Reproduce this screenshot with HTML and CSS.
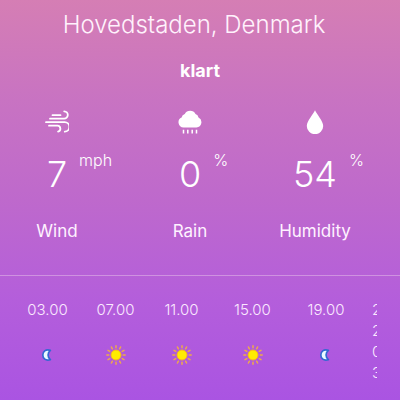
FILE: index.html
```html
<!DOCTYPE html>
<html lang="da">
<head>
<meta charset="utf-8">
<meta name="viewport" content="width=device-width, initial-scale=1">
<title>Hovedstaden, Denmark</title>
<link rel="stylesheet" href="styles.css">
</head>
<body>
<svg class="sprite" aria-hidden="true">
  <symbol id="sun" viewBox="0 0 20 20">
    <g stroke="#efaa48" stroke-width="1.5" stroke-linecap="round">
      <path d="M10 .8v2M10 17.2v2M.8 10h2M17.2 10h2M5.4 2l1 1.8M13.6 16.2l1 1.8M2 5.4l1.8 1M16.2 13.6l1.8 1M2 14.6l1.8-1M16.2 6.4l1.8-1M5.4 18l1-1.8M13.6 3.8l1-1.8"/>
    </g>
    <circle cx="10" cy="10" r="5" fill="#ffec00" stroke="#f8b51c" stroke-width="1"/>
  </symbol>
  <symbol id="moon" viewBox="0 0 20 20">
    <path d="M12.400 5.400C7.500 3.900 4.800 6.700 4.800 10s2.700 6.100 7.600 4.600C9.300 12.400 9.300 7.600 12.400 5.400z" fill="#e9fbff" stroke="#3468d2" stroke-width="1.700" stroke-linejoin="round"/>
  </symbol>
</svg>
<main class="weather">
  <h1 class="place">Hovedstaden, Denmark</h1>
  <p class="condition">klart</p>
  <section class="stats">
    <div class="stat">
      <svg class="stat-icon" viewBox="0 0 24 24" fill="none" stroke="#fff" stroke-width="1.800" stroke-linecap="round">
        <path d="M7.500 5.200H15.500M5 8.700h14a3.700 3.700 0 0 0 .2-7.400M1 12.200h18.500a4.700 4.700 0 0 1 .3 9.400M4 15.700h8.500a3 3 0 0 1 .6 5.900"/>
      </svg>
      <div class="value">7<span class="unit">mph</span></div>
      <div class="label">Wind</div>
    </div>
    <div class="stat">
      <svg class="stat-icon" viewBox="0 0 24 24" fill="#fff">
        <path d="M5.500 17.500A5.300 5.300 0 0 1 3.600 7.400 4.500 4.500 0 0 1 6.800 4 6 6 0 0 1 17.500 4a4.500 4.500 0 0 1 3 3.500A5.300 5.300 0 0 1 18.500 17.500z"/>
        <path d="M5.500 19.800v3.700M9.800 19.800v3.700M14.200 19.800v3.700M18.500 19.800v3.700" stroke="#fff" stroke-width="1.500"/>
      </svg>
      <div class="value">0<span class="unit">%</span></div>
      <div class="label">Rain</div>
    </div>
    <div class="stat">
      <svg class="stat-icon" viewBox="0 0 24 24" fill="#fff">
        <path d="M12 .2C10.500 4 3.800 11 3.800 16a8.200 8.200 0 0 0 16.400 0C20.200 11 13.500 4 12 .2z"/>
      </svg>
      <div class="value">54<span class="unit">%</span></div>
      <div class="label">Humidity</div>
    </div>
  </section>
  <section class="hours">
    <div class="hour"><span>03.00</span><svg class="hour-icon"><use href="#moon"/></svg></div>
    <div class="hour"><span>07.00</span><svg class="hour-icon"><use href="#sun"/></svg></div>
    <div class="hour"><span>11.00</span><svg class="hour-icon"><use href="#sun"/></svg></div>
    <div class="hour"><span>15.00</span><svg class="hour-icon"><use href="#sun"/></svg></div>
    <div class="hour"><span>19.00</span><svg class="hour-icon"><use href="#moon"/></svg></div>
    <div class="hour next-day">2<br>2<br>0<br>3</div>
  </section>
</main>
</body>
</html>
```
FILE: styles.css
```css
* { box-sizing: border-box; }

body {
  margin: 0;
  min-height: 100vh;
  background: linear-gradient(#d57eb4, #c873c2 25%, #be69cc 50%, #b45edb 75%, #aa54e2);
  color: #fff;
  font-family: Inter, "Open Sans", sans-serif;
}

.sprite { position: absolute; width: 0; height: 0; }

.place {
  margin: 0;
  padding: 9px 12px 0 0;
  font-size: 24px;
  line-height: 32px;
  font-weight: 300;
  text-align: center;
  color: #fff2fc;
}

.condition {
  margin: 19px 0 0;
  font-size: 18px;
  line-height: 22px;
  font-weight: 700;
  text-align: center;
}

.stats {
  display: grid;
  grid-template-columns: 114fr 152fr 98fr 36fr;
  padding: 28px 0 32px;
  border-bottom: 1px solid #cf92e0;
}

.stat {
  display: flex;
  flex-direction: column;
  align-items: center;
}

.stat-icon { width: 24px; height: 24px; }

.value {
  position: relative;
  margin-top: 16px;
  font-size: 36px;
  line-height: 48px;
  font-weight: 300;
}

.unit {
  position: absolute;
  top: 0;
  left: calc(100% + 12px);
  font-size: 16px;
  line-height: 20px;
}

.label {
  margin-top: 21px;
  font-size: 17px;
  line-height: 24px;
  color: #fff2ff;
}

.hours {
  display: grid;
  grid-template-columns: 69fr 67fr 65fr 77fr 70fr minmax(0, 16fr);
  margin: 23px 23px 0 13px;
  overflow: hidden;
  font-size: 15px;
  line-height: 21px;
  font-weight: 300;
  color: #fbe9ff;
}

.hour {
  display: flex;
  flex-direction: column;
  align-items: center;
}

.hour-icon {
  width: 20px;
  height: 20px;
  margin-top: 25px;
}

.next-day {
  display: block;
  padding-left: 11px;
}
```
